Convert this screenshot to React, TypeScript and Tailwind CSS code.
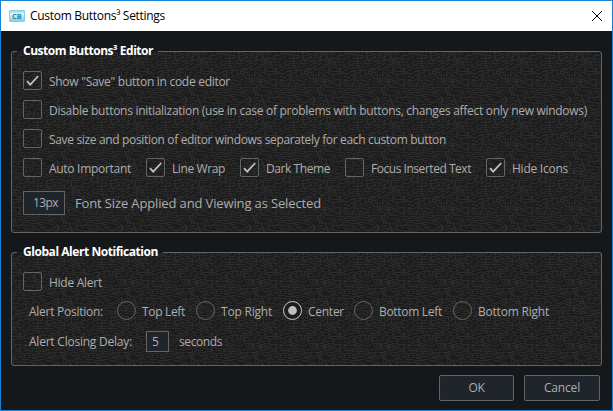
import { useLayoutEffect, useRef, useState, type ReactNode } from "react";

// Text run tracked so that it occupies exactly `w` pixels.
function Label({ w, className = "", children }: { w: number; className?: string; children: ReactNode }) {
  const ref = useRef<HTMLSpanElement>(null);
  const [spacing, setSpacing] = useState(0);
  useLayoutEffect(() => {
    const el = ref.current;
    if (!el) return;
    el.style.letterSpacing = "0px";
    const n = el.textContent?.length ?? 1;
    const s = (w - el.getBoundingClientRect().width) / n;
    el.style.letterSpacing = `${s}px`;
    setSpacing(s);
  }, [w]);
  return (
    <span className={`block shrink-0 whitespace-nowrap ${className}`} style={{ width: w }}>
      <span ref={ref} className="inline-block" style={{ letterSpacing: spacing }}>
        {children}
      </span>
    </span>
  );
}

// Seeded 64px tile of short strokes that drift down to the right.
function buildTexture() {
  const N = 64;
  const grid = new Uint8Array(N * N);
  let seed = 20177;
  const rnd = () => {
    seed = (seed * 1103515245 + 12345) & 0x7fffffff;
    return (seed >> 8) / 0x7fffff;
  };
  const at = (x: number, y: number) => ((y + N) % N) * N + ((x + N) % N);
  for (let i = 0; i < 1500; i++) {
    let x = Math.floor(rnd() * N);
    let y = Math.floor(rnd() * N);
    const steps = 3 + Math.floor(rnd() * 7);
    const vertical = rnd() < 0.2;
    for (let k = 0; k < steps; k++) {
      if (grid[at(x, y)] || grid[at(x, y - 1)] + grid[at(x, y + 1)] > (vertical ? 1 : 0)) break;
      grid[at(x, y)] = 1;
      if (vertical) {
        y += 1;
      } else {
        x += 1;
        if (rnd() < 0.3) {
          grid[at(x, y)] = 1;
          y += 1;
        }
      }
    }
  }
  let d = "";
  for (let y = 0; y < N; y++)
    for (let x = 0; x < N; x++) if (grid[y * N + x]) d += `M${x} ${y}h1v1h-1z`;
  return d;
}
const texture = buildTexture();

function Texture({ id }: { id: string }) {
  return (
    <svg className="absolute inset-0 h-full w-full rounded-[2px]" shapeRendering="crispEdges">
      <defs>
        <pattern id={id} width="64" height="64" patternUnits="userSpaceOnUse">
          <rect width="64" height="64" fill="#1d1d1d" />
          <path d={texture} fill="#2c2c2c" />
        </pattern>
      </defs>
      <rect width="100%" height="100%" fill={`url(#${id})`} />
    </svg>
  );
}

function Group({ id, title, w, className, children }: { id: string; title: string; w: number; className: string; children: ReactNode }) {
  return (
    <section className={`relative ml-[10px] w-[591px] ${className}`}>
      <Texture id={id} />
      <div className="pointer-events-none absolute inset-0 rounded-[3px] border border-[#646464]" />
      <div className="absolute left-[6px] top-0 h-px bg-[#1d1d1d]" style={{ width: w + 11 }} />
      <div className="absolute left-[12px] top-[-8px] leading-[16px]">
        <Label w={w} className="text-[12px] font-bold text-white">{title}</Label>
      </div>
      <div className="relative flex flex-col pl-[12px]">{children}</div>
    </section>
  );
}

function Check({ label, w, on = false }: { label: string; w: number; on?: boolean }) {
  return (
    <label className="flex h-[19px] items-center">
      <span className="block size-[19px] rounded-[2px] border border-[#646464]">
        {on && (
          <svg viewBox="0 0 17 17" className="block size-[17px]" fill="none" stroke="#c0c0c0" strokeWidth="1.8">
            <path d="M3 9.2L6.2 12.7L14.2 4" />
          </svg>
        )}
      </span>
      <Label w={w} className="ml-[7px] pt-[3px] leading-[16px]">{label}</Label>
    </label>
  );
}

function Radio({ label, w, on = false }: { label: string; w: number; on?: boolean }) {
  return (
    <label className="flex h-[19px] items-center">
      <svg viewBox="0 0 19 19" className="size-[19px]">
        <circle cx="9.5" cy="9.5" r="9" fill={on ? "#1d1d1d" : "none"} stroke={on ? "#c8c8c8" : "#646464"} />
        {on && <circle cx="9.5" cy="9.5" r="4.4" fill="#c0c0c0" />}
      </svg>
      <Label w={w} className="ml-[6px] pt-[3px] leading-[16px]">{label}</Label>
    </label>
  );
}

export default function App() {
  return (
    <div className="flex h-[411px] w-[613px] flex-col border border-[#1883d7] bg-[#14181b] font-['Open_Sans','Noto_Sans',sans-serif] text-[12px] text-[#adadad]">
      <header className="flex h-[30px] shrink-0 items-center bg-white text-black">
        <svg viewBox="0 0 16 12" className="ml-[8px] h-[12px] w-[16px]">
          <defs>
            <linearGradient id="logo" x1="0" y1="0" x2="0" y2="1">
              <stop offset="0" stopColor="#8fd3e8" />
              <stop offset="0.3" stopColor="#dff5fa" />
              <stop offset="1" stopColor="#7bcbe2" />
            </linearGradient>
          </defs>
          <rect x="0.5" y="0.5" width="15" height="11" rx="0.5" fill="url(#logo)" stroke="#8ccfe3" />
          <text x="8" y="8.8" textAnchor="middle" fontSize="7.5" fontWeight="700" fill="#2d87a5">CB</text>
        </svg>
        <Label w={135} className="ml-[5px] leading-[16px]">Custom Buttons³ Settings</Label>
        <svg viewBox="0 0 10 10" className="ml-auto mr-[10px] size-[10px]" stroke="#000" strokeWidth="1">
          <path d="M0 0L10 10M10 0L0 10" />
        </svg>
      </header>

      <Group id="weave-a" title="Custom Buttons³ Editor" w={130} className="mt-[20px] h-[182px]">
        <div className="mt-[20px] flex flex-col gap-[10px]">
          <Check on label={'Show "Save" button in code editor'} w={181} />
          <Check label="Disable buttons initialization (use in case of problems with buttons, changes affect only new windows)" w={538} />
          <Check label="Save size and position of editor windows separately for each custom button" w={397} />
          <div className="flex">
            <div className="w-[123px]"><Check label="Auto Important" w={82} /></div>
            <div className="w-[94px]"><Check on label="Line Wrap" w={53} /></div>
            <div className="w-[105px]"><Check on label="Dark Theme" w={64} /></div>
            <div className="w-[141px]"><Check label="Focus Inserted Text" w={100} /></div>
            <Check on label="Hide Icons" w={56} />
          </div>
        </div>
        <div className="mt-[14px] flex h-[24px] items-center">
          <div className="flex h-[24px] w-[42px] items-center border border-[#646464] bg-[#20242b] pl-[9px]">
            <Label w={25}>13px</Label>
          </div>
          <Label w={246} className="ml-[10px] pt-[2px] text-[13px]">Font Size Applied and Viewing as Selected</Label>
        </div>
      </Group>

      <Group id="weave-b" title="Global Alert Notification" w={135} className="mt-[19px] h-[114px]">
        <div className="mt-[20px]"><Check label="Hide Alert" w={53} /></div>
        <div className="mt-[10px] flex h-[19px] items-center pl-[6px]">
          <Label w={74} className="mr-[14px] pt-[3px] leading-[16px]">Alert Position:</Label>
          <div className="w-[79px]"><Radio label="Top Left" w={43} /></div>
          <div className="w-[87px]"><Radio label="Top Right" w={51} /></div>
          <div className="w-[71px]"><Radio on label="Center" w={36} /></div>
          <div className="w-[99px]"><Radio label="Bottom Left" w={63} /></div>
          <Radio label="Bottom Right" w={71} />
        </div>
        <div className="mt-[11px] flex h-[21px] items-center pl-[6px]">
          <Label w={103}>Alert Closing Delay:</Label>
          <div className="ml-[14px] flex h-[21px] w-[23px] items-center border border-[#646464] bg-[#20242b] pl-[5px]">
            <Label w={7}>5</Label>
          </div>
          <Label w={43} className="ml-[10px]">seconds</Label>
        </div>
      </Group>

      <footer className="mt-[9px] flex justify-end gap-[10px] pr-[12px]">
        <button className="flex h-[26px] w-[75px] items-center justify-center rounded-[2px] border border-[#646464] bg-[#20242b]">
          <Label w={16}>OK</Label>
        </button>
        <button className="flex h-[26px] w-[76px] items-center justify-center rounded-[2px] border border-[#646464] bg-[#20242b]">
          <Label w={36}>Cancel</Label>
        </button>
      </footer>
    </div>
  );
}
